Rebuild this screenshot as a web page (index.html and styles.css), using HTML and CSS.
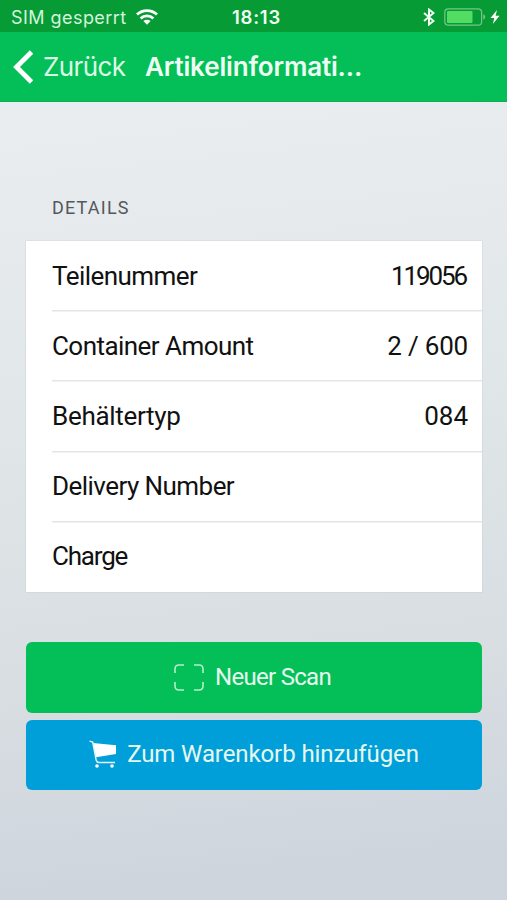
FILE: index.html
```html
<!DOCTYPE html>
<html lang="de">
<head>
    <meta charset="UTF-8">
    <meta name="viewport" content="width=device-width, initial-scale=1.0">
    <title>Artikelinformationen</title>
    <link rel="stylesheet" href="styles.css">
</head>
<body>

    <div class="status-bar">
        <div class="carrier">
            <span class="carrier-name">SIM gesperrt</span>
            <svg class="wifi" viewBox="0 0 22 16" width="22" height="16">
                <g fill="none" stroke="#fff" stroke-width="2.8">
                    <path d="M1 5.6a14.4 14.4 0 0 1 20 0" />
                    <path d="M4.6 9.4a9.2 9.2 0 0 1 12.8 0" />
                </g>
                <path fill="#fff" d="M11 15.8l-3.6-3.7a5.2 5.2 0 0 1 7.2 0z" />
            </svg>
        </div>
        <span class="time">18:13</span>
        <div class="indicators">
            <svg viewBox="0 0 12 18" width="12" height="18">
                <path fill="none" stroke="#effff2" stroke-width="2" d="M1 5l9.5 8L6 16.5v-15L10.5 5 1 13" />
            </svg>
            <svg class="battery" viewBox="0 0 42 18" width="42" height="18">
                <rect x="0.8" y="0.8" width="36.8" height="16.4" rx="3.5" fill="none" stroke="#75c788" stroke-width="1.2" />
                <rect x="3" y="3" width="25.5" height="12" rx="1" fill="#52dc62" />
                <path fill="#75c788" d="M39.3 6.3c2.4.8 2.4 4.6 0 5.4z" />
            </svg>
            <svg class="bolt" viewBox="0 0 10 14" width="10" height="14">
                <path fill="#fff" d="M7 0L0.5 8h3.8L2.8 14 9.6 5.8H5.6z" />
            </svg>
        </div>
    </div>

    <header class="nav-bar">
        <a class="back" href="#">
            <svg viewBox="0 0 20 34" width="20" height="34">
                <path fill="none" stroke="#fff" stroke-width="4.8" d="M18.5 2L3.5 17l15 15" />
            </svg>
            <span class="back-label">Zurück</span>
        </a>
        <h1 class="title">Artikelinformati...</h1>
    </header>

    <main class="content">
        <h2 class="section-title">DETAILS</h2>

        <ul class="details">
            <li class="row"><span class="label">Teilenummer</span><span class="value part">119056</span></li>
            <li class="row"><span class="label">Container Amount</span><span class="value count">2 / 600</span></li>
            <li class="row"><span class="label type">Behältertyp</span><span class="value">084</span></li>
            <li class="row"><span class="label">Delivery Number</span></li>
            <li class="row"><span class="label charge">Charge</span></li>
        </ul>

        <div class="buttons">
            <button class="btn btn-scan">
                <svg viewBox="0 0 30 27" width="30" height="27">
                    <path fill="none" stroke="#b5f0c8" stroke-width="1.6" d="M1 9V5q0-4 4-4h5M20 1h5q4 0 4 4v4M29 18v4q0 4-4 4h-5M10 26H5q-4 0-4-4v-4" />
                </svg>
                <span class="scan-label">Neuer Scan</span>
            </button>
            <button class="btn btn-cart">
                <svg viewBox="0 0 28 28" width="28" height="28">
                    <path fill="#fff" d="M4 3l23 2.3v8.6L7 17.3z" />
                    <path fill="none" stroke="#e6f6fc" stroke-width="1.4" d="M0.5 1.2l3.2.9L7.2 20.3q.6 2.2 2.8 2.2h16" />
                    <circle cx="8" cy="26" r="1.8" fill="#fff" />
                    <circle cx="23" cy="26" r="1.8" fill="#fff" />
                </svg>
                <span class="cart-label">Zum Warenkorb hinzufügen</span>
            </button>
        </div>
    </main>

</body>
</html>
```
FILE: styles.css
```css
* {
    box-sizing: border-box;
}

body {
    font-family: Roboto, sans-serif;
    margin: 0;
    height: 900px;
    color: #111;
    background: linear-gradient(174deg, #e9edf0 12%, #e1e6e8 45%, #d7dde1 75%, #ced5dd 95%);
    overflow: hidden;
}

.status-bar {
    display: grid;
    grid-template-columns: 1fr auto 1fr;
    align-items: center;
    height: 32px;
    padding: 2px 7px 0 11px;
    background: #079b36;
    color: #fff;
    font-family: Inter, sans-serif;
    font-size: 18px;
}

.carrier {
    display: flex;
    align-items: center;
    gap: 9px;
    color: #d5f5dc;
}

.carrier-name {
    letter-spacing: 0.45px;
}

.time {
    padding-left: 2px;
    font-weight: 600;
    font-size: 18.5px;
    letter-spacing: 0.8px;
    color: #effff2;
}

.indicators {
    display: flex;
    align-items: center;
    justify-content: flex-end;
}

.battery {
    margin-left: 9px;
}

.bolt {
    margin-left: 4px;
}

.nav-bar {
    display: flex;
    align-items: center;
    height: 70px;
    padding-left: 13px;
    background: #04bf58;
    border-bottom: 1px solid #12ab56;
    font-family: Inter, sans-serif;
}

.back {
    display: flex;
    align-items: center;
    gap: 10px;
    width: 132px;
    color: #dcfbe6;
    font-size: 26px;
    letter-spacing: -0.6px;
    text-decoration: none;
}

.title {
    margin: 0;
    color: #effff4;
    font-size: 26px;
    font-weight: 600;
    letter-spacing: -0.15px;
}

.content {
    padding: 95px 25px 0 26px;
}

.section-title {
    margin: 0 0 23px 26px;
    color: #53585b;
    font-size: 18px;
    font-weight: 400;
    line-height: 21px;
    letter-spacing: 1.2px;
}

.details {
    margin: 0;
    padding: 0 0 0 26px;
    height: 351px;
    display: flex;
    flex-direction: column;
    list-style: none;
    background: #fff;
    box-shadow: 0 0 1px 0 #aeb4b8;
}

.row {
    flex: 1;
    display: flex;
    align-items: center;
    justify-content: space-between;
    padding: 0 14px 1px 0;
    font-size: 26px;
}

.row + .row {
    box-shadow: 0 -1px #e2e4e5, inset 0 1px #f1f2f2;
}

.label {
    letter-spacing: -0.55px;
}

.type {
    letter-spacing: -0.3px;
}

.charge {
    letter-spacing: -1.2px;
}

.part {
    margin-right: 2px;
    letter-spacing: -2.1px;
}

.count {
    letter-spacing: -0.2px;
}

.buttons {
    display: flex;
    flex-direction: column;
    gap: 7px;
    margin-top: 50px;
}

.btn {
    display: flex;
    align-items: center;
    justify-content: center;
    gap: 11px;
    height: 70.5px;
    padding: 0 3px 0 0;
    border: none;
    border-radius: 6px;
    color: #e6f8ee;
    font-family: Roboto, sans-serif;
    font-size: 24px;
}

.btn-scan {
    background: #04bf58;
}

.btn-cart {
    gap: 10px;
    padding: 0 0 2px;
    background: #009fda;
}

.scan-label {
    letter-spacing: -0.7px;
}

.cart-label {
    letter-spacing: -0.1px;
}
```
